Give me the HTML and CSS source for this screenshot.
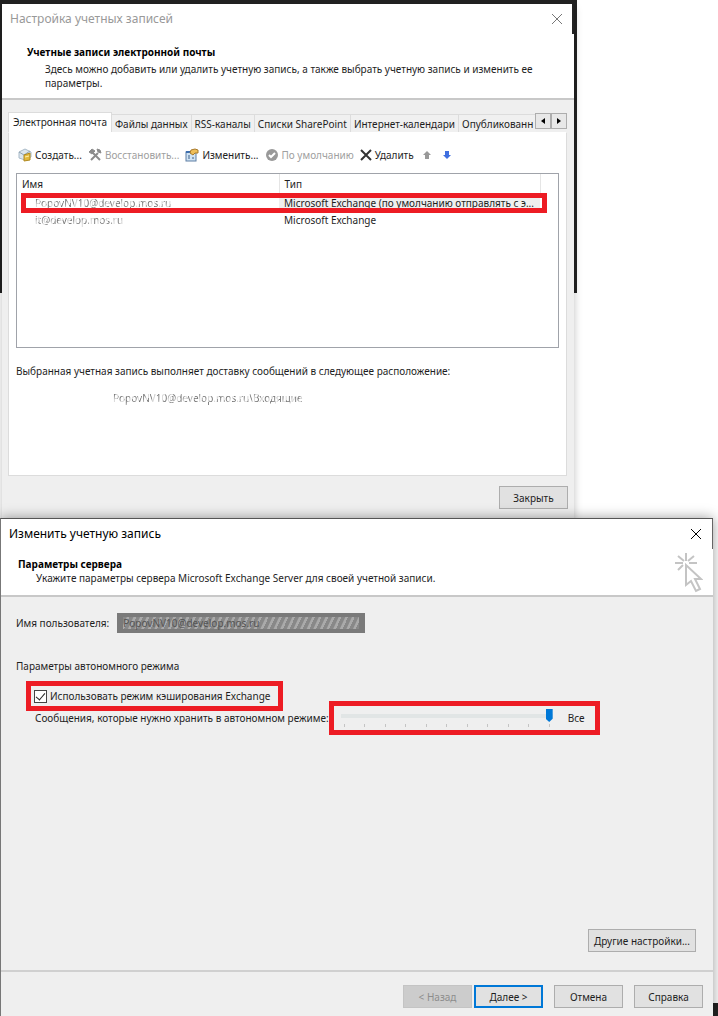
FILE: index.html
```html
<!DOCTYPE html>
<html lang="ru">
<head>
    <meta charset="UTF-8">
    <meta name="viewport" content="width=device-width, initial-scale=1.0">
    <title>Настройка учетных записей</title>
    <link rel="stylesheet" href="styles.css">
</head>
<body>
    <div class="backdrop"></div>
    <div class="backdrop bottom"></div>

    <section class="window accounts">
        <div class="titlebar inactive">
            <span>Настройка учетных записей</span>
            <button class="close" aria-label="Закрыть окно">
                <svg width="12" height="12" viewBox="0 0 12 12"><path d="M1 1L11 11M11 1L1 11" stroke="currentColor" fill="none"/></svg>
            </button>
        </div>
        <header class="head">
            <h1>Учетные записи электронной почты</h1>
            <p>Здесь можно добавить или удалить учетную запись, а также выбрать учетную запись и изменить ее параметры.</p>
        </header>

        <div class="tabs">
            <button class="tab active">Электронная почта</button>
            <button class="tab">Файлы данных</button>
            <button class="tab">RSS-каналы</button>
            <button class="tab">Списки SharePoint</button>
            <button class="tab">Интернет-календари</button>
            <button class="tab last">Опубликованн</button>
            <div class="scroll">
                <button aria-label="Назад"><svg width="4" height="6" viewBox="0 0 4 6"><path d="M4 0V6L0 3Z"/></svg></button>
                <button aria-label="Вперед"><svg width="4" height="6" viewBox="0 0 4 6"><path d="M0 0V6L4 3Z"/></svg></button>
            </div>
        </div>

        <div class="panel">
            <div class="toolbar">
                <button class="tool">
                    <svg width="14" height="14" viewBox="0 0 14 14">
                        <path d="M1 4L7 1L13 4V9L7 12L1 10Z" fill="#dce6ee" stroke="#a9bac8"/>
                        <path d="M1 4L6 7L12 3" fill="none" stroke="#8fa3b3"/>
                        <path d="M6 7L12 5V12L6 13Z" fill="#e3b93c" stroke="#b08a22"/>
                        <path d="M7 9L11 8" stroke="#fff2b0"/>
                    </svg>Создать...
                </button>
                <button class="tool" disabled>
                    <svg width="14" height="14" viewBox="0 0 14 14">
                        <path d="M4 4L12 12M10 5L3 12" stroke="#8c8c8c" stroke-width="2" fill="none"/>
                        <path d="M1 4L4 1L7 3L4 6ZM9 1L10 4L13 5L12 2Z" fill="#8c8c8c" stroke="#8c8c8c"/>
                    </svg>Восстановить...
                </button>
                <button class="tool">
                    <svg width="14" height="14" viewBox="0 0 14 14">
                        <rect x="1" y="4" width="10" height="9" fill="#cfe3f5" stroke="#5f7fa3"/>
                        <rect x="1" y="3" width="7" height="2" fill="#3d6fb0"/>
                        <path d="M3 8H5M3 10H5M7 10H9" stroke="#3d5f86"/>
                        <path d="M6 2L10 1L13 2V5L10 5L8 7L5 5Z" fill="#efbf5a" stroke="#a87a2c"/>
                    </svg>Изменить...
                </button>
                <button class="tool" disabled>
                    <svg width="14" height="14" viewBox="0 0 14 14">
                        <circle cx="7" cy="7" r="6" fill="#999"/>
                        <path d="M4 7L6 9L10 5" fill="none" stroke="#fff" stroke-width="2"/>
                    </svg>По умолчанию
                </button>
                <button class="tool">
                    <svg width="12" height="12" viewBox="0 0 12 12"><path d="M1 1L11 11M11 1L1 11" stroke="#333" stroke-width="2" fill="none"/></svg>Удалить
                </button>
                <button class="tool arrow" disabled aria-label="Вверх">
                    <svg width="8" height="8" viewBox="0 0 8 8"><path d="M4 0L8 4H6V8H2V4H0Z" fill="#999"/></svg>
                </button>
                <button class="tool arrow" aria-label="Вниз">
                    <svg width="8" height="8" viewBox="0 0 8 8"><path d="M4 8L8 4H6V0H2V4H0Z" fill="#3f6fe0"/></svg>
                </button>
            </div>

            <div class="list">
                <table>
                    <colgroup><col class="col-name"><col><col class="col-end"></colgroup>
                    <thead>
                        <tr><th>Имя</th><th>Тип</th><th></th></tr>
                    </thead>
                    <tbody>
                        <tr class="selected">
                            <td><span class="smudge">PopovNV10@develop.mos.ru</span></td>
                            <td>Microsoft Exchange (по умолчанию отправлять с э...</td>
                            <td></td>
                        </tr>
                        <tr>
                            <td><span class="smudge">it@develop.mos.ru</span></td>
                            <td>Microsoft Exchange</td>
                            <td></td>
                        </tr>
                    </tbody>
                </table>
            </div>

            <p class="delivery">Выбранная учетная запись выполняет доставку сообщений в следующее расположение:</p>
            <p class="location"><span class="smudge">PopovNV10@develop.mos.ru\Входящие</span></p>
        </div>

        <footer class="buttons">
            <button class="btn">Закрыть</button>
        </footer>
    </section>

    <section class="window edit">
        <div class="titlebar">
            <span>Изменить учетную запись</span>
            <button class="close" aria-label="Закрыть окно">
                <svg width="12" height="12" viewBox="0 0 12 12"><path d="M1 1L11 11M11 1L1 11" stroke="currentColor" fill="none"/></svg>
            </button>
        </div>
        <header class="head">
            <div>
                <h2>Параметры сервера</h2>
                <p>Укажите параметры сервера Microsoft Exchange Server для своей учетной записи.</p>
            </div>
            <svg class="pointer" width="28" height="40" viewBox="0 0 28 40" fill="none" stroke="#c4c4c4" stroke-width="2">
                <path d="M11 0V8M0 10H8M14 10H22M3 3L9 8M19 3L13 8M3 17L8 12"/>
                <path d="M11 12V32L16 28L21 38L25 36L20 26H26Z"/>
            </svg>
        </header>

        <div class="content">
            <div class="user">
                <label for="user">Имя пользователя:</label>
                <input type="text" id="user" value="PopovNV10@develop.mos.ru" readonly>
            </div>
            <p class="group">Параметры автономного режима</p>
            <label class="mark cache">
                <input type="checkbox" checked>
                Использовать режим кэширования Exchange
            </label>
            <div class="keep">
                <label for="keep">Сообщения, которые нужно хранить в автономном режиме:</label>
                <div class="mark slider">
                    <div class="range">
                        <input type="range" id="keep" min="0" max="10" value="10">
                        <div class="ticks"><i></i><i></i><i></i><i></i><i></i><i></i><i></i><i></i><i></i><i></i><i></i></div>
                    </div>
                    <span>Все</span>
                </div>
            </div>
            <button class="btn other">Другие настройки...</button>
        </div>

        <footer class="buttons">
            <button class="btn" disabled>&lt; Назад</button>
            <button class="btn next">Далее &gt;</button>
            <button class="btn">Отмена</button>
            <button class="btn">Справка</button>
        </footer>
    </section>
</body>
</html>
```

FILE: styles.css
```css
* {
    box-sizing: border-box;
}
body {
    margin: 0;
    min-height: 100vh;
    padding: 4px 5px 0 1px;
    display: flex;
    flex-direction: column;
    position: relative;
    background: #fff;
    font-family: "Noto Sans", "Open Sans", sans-serif;
    font-size: 10px;
    line-height: 14px;
    color: #1e1e1e;
}
h1, h2, p {
    margin: 0;
}
h1, h2 {
    font-size: 10px;
    line-height: 14px;
    color: #000;
}
button, input {
    font: inherit;
    color: inherit;
}
button {
    padding: 0;
}
.backdrop {
    position: absolute;
    top: 0;
    left: 0;
    right: 141px;
    height: 293px;
    background: #222;
}
.backdrop.bottom {
    top: auto;
    bottom: 0;
    right: 0;
    height: 13px;
    z-index: 1;
}

/* windows */
.window {
    position: relative;
    display: flex;
    flex-direction: column;
    background: #efefef;
}
.accounts {
    margin: 0 139px 0 1px;
    box-shadow: 0 4px 8px rgba(0, 0, 0, 0.25);
}
.edit {
    flex: 1;
    z-index: 2;
    border-top: 1px solid #555;
    border-left: 1px solid #777;
    margin-left: -1px;
    box-shadow: 0 0 12px rgba(0, 0, 0, 0.4);
}
.titlebar {
    display: flex;
    justify-content: space-between;
    align-items: center;
    height: 30px;
    padding: 0 9px 0 8px;
    border-right: 2px solid #222;
    background: #fff;
    font-size: 12px;
    line-height: 16px;
    color: #000;
}
.edit .titlebar {
    border-right: 1px solid #666;
    padding-right: 10px;
}
.inactive {
    color: #999;
}
.close {
    display: flex;
    border: 0;
    background: none;
}
.inactive .close {
    color: #777;
}
.head {
    background: #fff;
    border-bottom: 2px solid #c8c8c8;
}
.accounts .head {
    padding: 11px 40px 8px 25px;
}
.accounts .head p {
    padding: 3px 0 0 18px;
}
.edit .head {
    display: flex;
    justify-content: space-between;
    padding: 4px 10px 2px 17px;
}
.edit .head > div {
    padding-top: 4px;
}
.edit .head p {
    padding-left: 18px;
}

/* tabs */
.tabs {
    display: flex;
    align-items: flex-end;
    position: relative;
    margin: 12px 7px 0 6px;
}
.tab {
    flex: none;
    height: 18px;
    padding: 0 3px;
    border: 1px solid #dcdcdc;
    border-width: 1px 1px 0 0;
    background: #f0f0f0;
    white-space: nowrap;
}
.tab.active {
    height: 20px;
    padding: 0 4px 2px;
    border-left-width: 1px;
    background: #fff;
}
.tab.last {
    border-right: 0;
}
.scroll {
    position: absolute;
    right: 0;
    top: 1px;
    display: flex;
}
.scroll button {
    display: flex;
    align-items: center;
    justify-content: center;
    width: 16px;
    height: 16px;
    border: 1px solid #adadad;
    background: #e8e8e8;
}
.panel {
    margin: 0 7px 0 6px;
    height: 344px;
    padding: 14px 7px 0;
    border: 1px solid #dcdcdc;
    border-top-color: #fff;
    background: #fff;
}
.toolbar {
    display: flex;
    align-items: center;
    gap: 6px;
    height: 16px;
    padding-left: 2px;
}
.tool {
    display: flex;
    align-items: center;
    gap: 3px;
    border: 0;
    background: none;
}
.tool:disabled {
    color: #a0a0a0;
}
.arrow {
    padding: 0 3px;
}

/* account list */
.list {
    height: 175px;
    margin-top: 10px;
    border: 1px solid #a0a3aa;
}
table {
    width: 100%;
    border-collapse: collapse;
    table-layout: fixed;
}
.col-name {
    width: 262px;
}
.col-end {
    width: 18px;
}
th, td {
    height: 17px;
    padding: 0 0 0 5px;
    text-align: left;
    font-weight: normal;
    white-space: nowrap;
}
th {
    height: 20px;
    border-right: 1px solid #e5e5e5;
}
th:last-child {
    border-right: 0;
}
td:first-child {
    padding-left: 18px;
}
.selected {
    position: relative;
}
.selected td:nth-child(2) {
    background: #efefef;
}
.selected td:first-child::after {
    content: "";
    position: absolute;
    top: -1px;
    bottom: -2px;
    left: 4px;
    right: 11px;
    border: 5px solid #ed1c24;
}
.smudge {
    color: #777;
    -webkit-mask-image: repeating-linear-gradient(115deg, #000 0 3px, rgba(0, 0, 0, 0.3) 5px 7px);
    mask-image: repeating-linear-gradient(115deg, #000 0 3px, rgba(0, 0, 0, 0.3) 5px 7px);
}
.delivery {
    margin-top: 16px;
}
.location {
    margin-top: 13px;
    padding-left: 97px;
}

/* buttons */
.btn {
    min-width: 69px;
    height: 23px;
    border: 1px solid #adadad;
    background: #e1e1e1;
}
.btn:disabled {
    border-color: #c4c4c4;
    background: #ccc;
    color: #8c8c8c;
}
.btn.next {
    border: 2px solid #0078d7;
    margin-left: -9px;
}
.buttons {
    display: flex;
    justify-content: flex-end;
    gap: 11px;
}
.accounts .buttons {
    padding: 10px 6px 9px;
}
.edit .buttons {
    padding: 13px 10px 8px;
    border-top: 2px solid #d0d0d0;
}

/* server settings */
.content {
    flex: 1;
    display: flex;
    flex-direction: column;
    align-items: flex-start;
    padding: 16px 17px 18px 15px;
}
.user {
    display: flex;
    align-items: center;
    gap: 8px;
}
.user input {
    width: 248px;
    height: 20px;
    padding: 3px 5px;
    border: 1px solid #7a7a7a;
    background: repeating-linear-gradient(115deg, #888 0 3px, #aaa 4px 6px) content-box, #7a7a7a;
    color: #555;
}
.group {
    margin-top: 26px;
}
.mark {
    display: flex;
    align-items: center;
    border: 5px solid #ed1c24;
}
.cache {
    height: 30px;
    margin: 8px 0 0 10px;
    padding: 0 8px 0 3px;
    gap: 3px;
}
.cache input {
    appearance: none;
    width: 13px;
    height: 13px;
    margin: 0;
    border: 1px solid #444;
    background: #fff;
    position: relative;
}
.cache input:checked::after {
    content: "";
    position: absolute;
    left: 3px;
    top: 0;
    width: 4px;
    height: 8px;
    border: solid #222;
    border-width: 0 1px 1px 0;
    transform: rotate(40deg);
}
.keep {
    display: flex;
    align-items: center;
    margin: -10px 0 0 19px;
}
.slider {
    height: 34px;
    padding: 0 10px 0 7px;
    gap: 15px;
}
.range {
    width: 212px;
}
.range input {
    appearance: none;
    display: block;
    width: 100%;
    height: 13px;
    margin: 0;
    background: linear-gradient(#e1e5e5, #e1e5e5) center / 100% 4px no-repeat;
}
.range input::-webkit-slider-thumb {
    appearance: none;
    width: 7px;
    height: 13px;
    background: #0078d7;
    clip-path: polygon(0 0, 100% 0, 100% 75%, 50% 100%, 0 75%);
}
.ticks {
    display: flex;
    justify-content: space-between;
    padding: 2px 3px 0;
}
.ticks i {
    width: 1px;
    height: 3px;
    background: #c4c4c4;
}
.other {
    width: 108px;
    margin-top: auto;
    align-self: flex-end;
}
```
